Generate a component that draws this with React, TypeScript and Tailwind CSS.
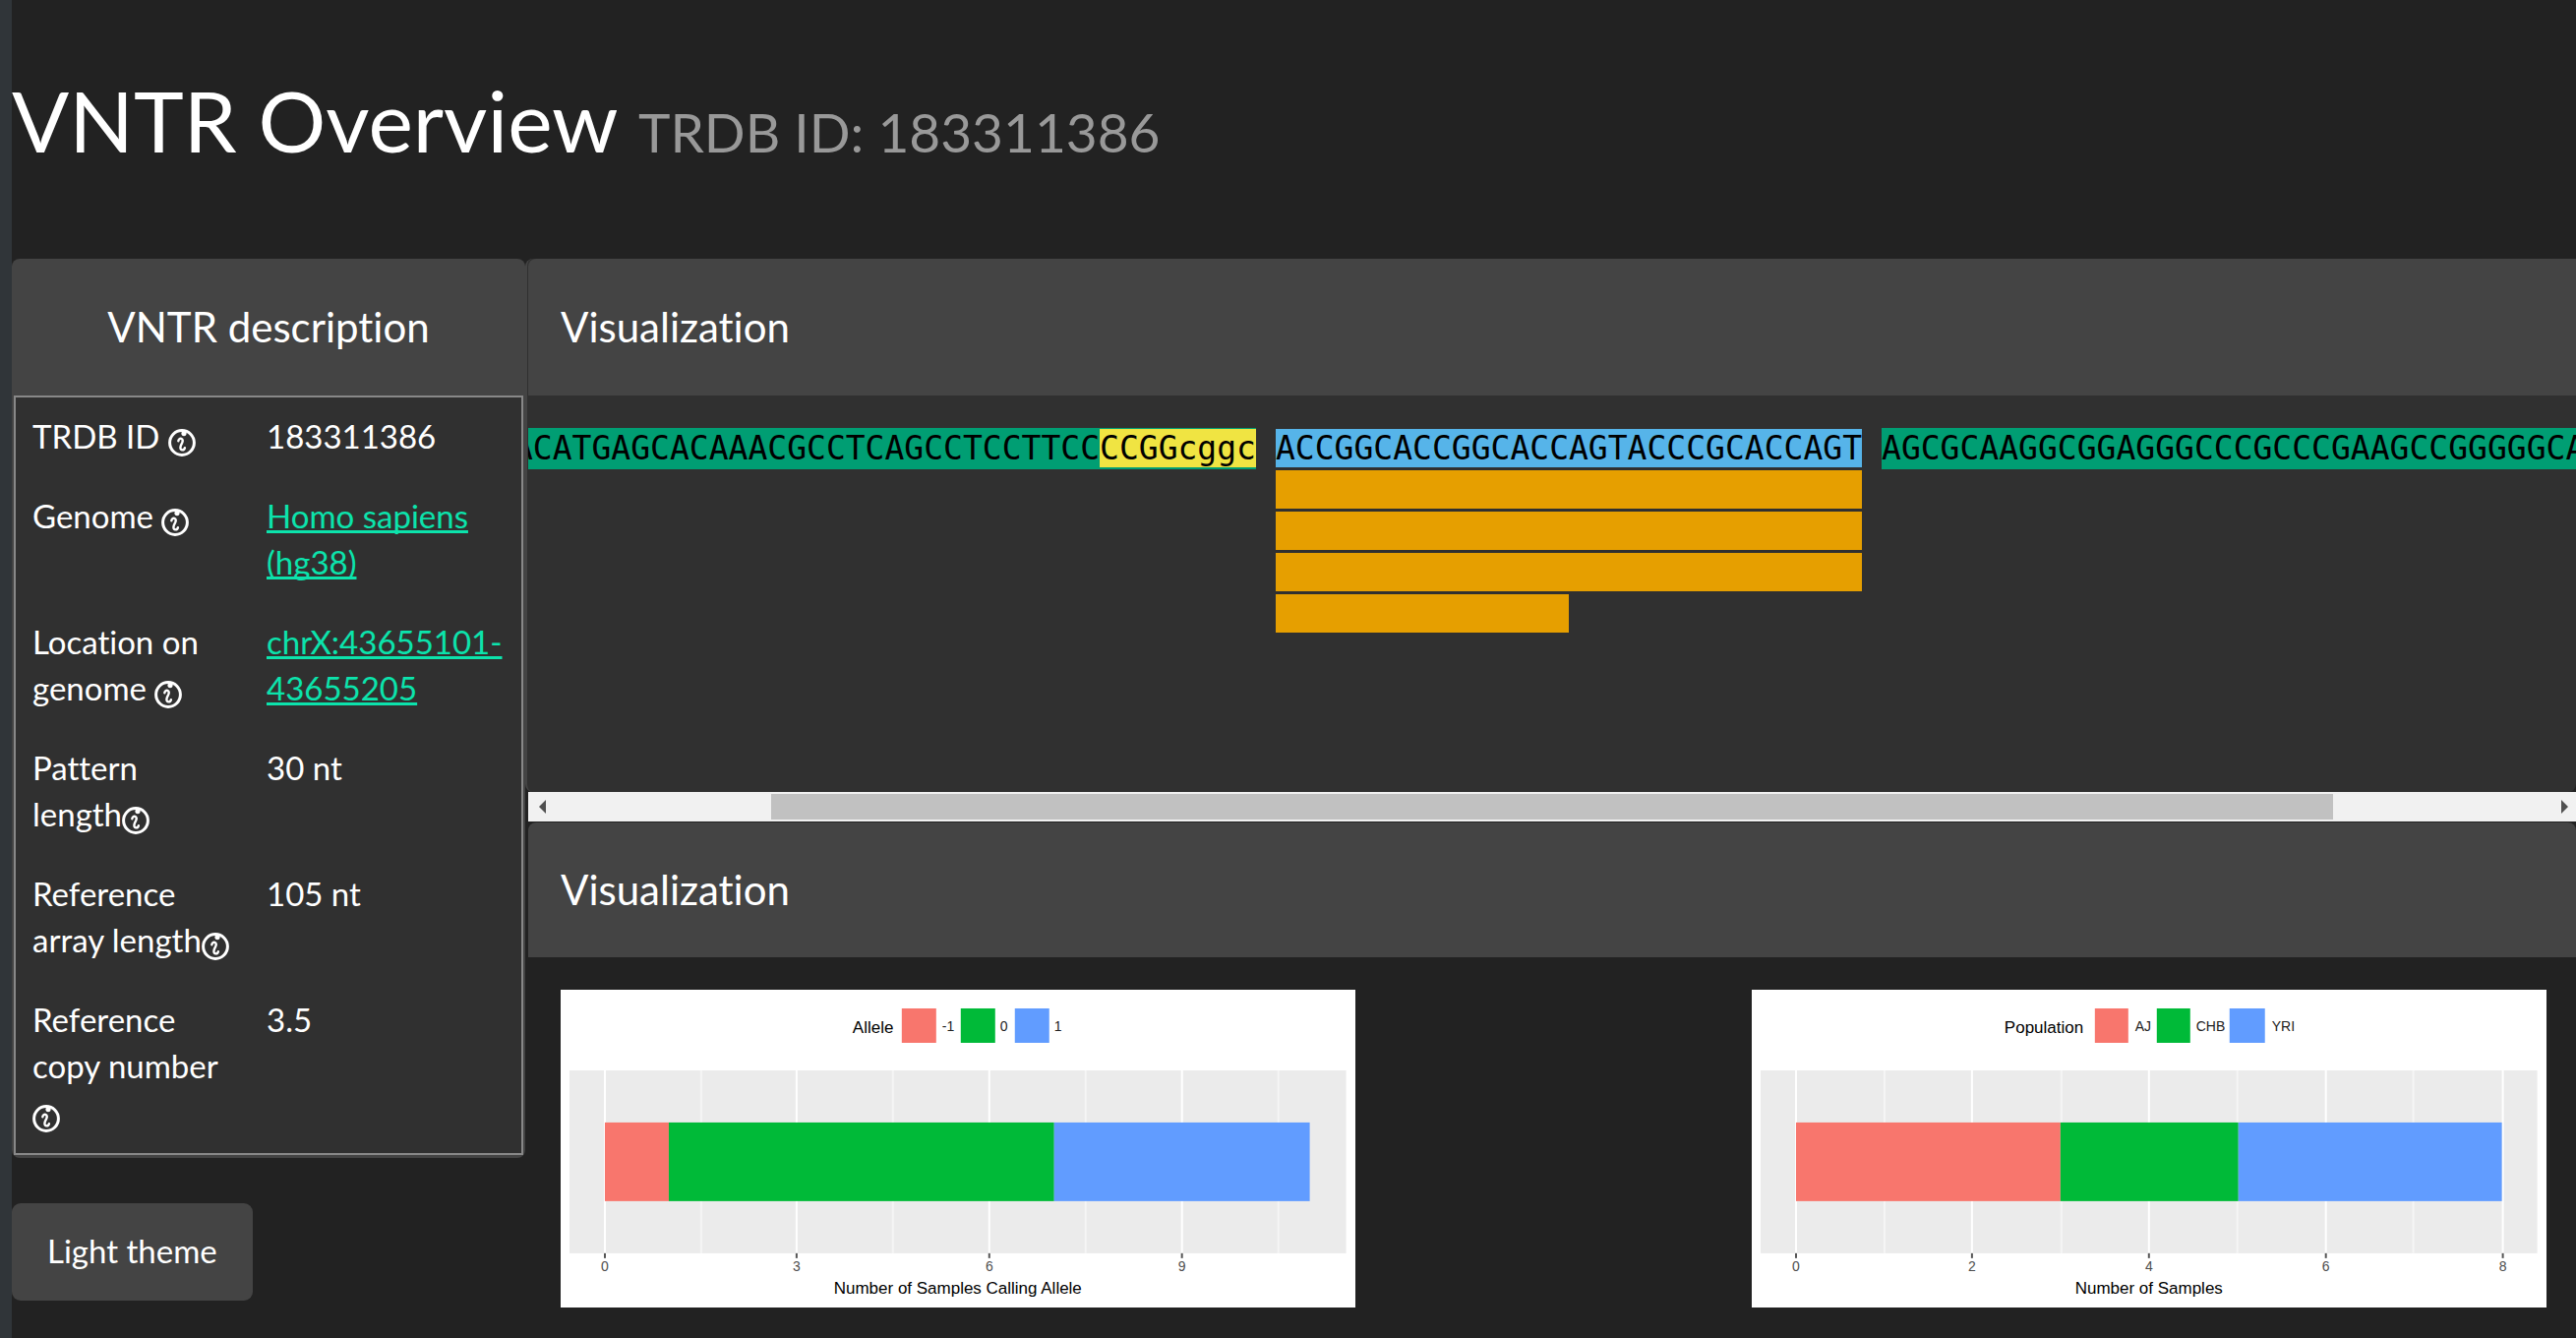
import React from "react";

function HelpIcon() {
  return (
    <svg
      role="img"
      aria-label="Help"
      viewBox="0 0 28 28"
      className="inline-block h-7 w-7 align-[-8px]"
      fill="none"
      stroke="currentColor"
      strokeLinecap="round"
      strokeLinejoin="round"
    >
      <circle cx="14" cy="14" r="12.4" strokeWidth="3" />
      <circle cx="16" cy="4.6" r="2.6" fill="currentColor" stroke="none" />
      <path
        d="M10.3 12.2C10.6 10.2 12 9.5 13.3 9.9C15 10.5 15 12 14.3 13.8L12.8 17C12 19.2 12.4 21 14 21.3C15.6 21.5 16.6 20.7 16.9 19.2"
        strokeWidth="2.4"
      />
    </svg>
  );
}

type Row = { label: React.ReactNode; value: string; href?: string };

const rows: Row[] = [
  { label: <>TRDB ID <HelpIcon /></>, value: "183311386" },
  { label: <>Genome <HelpIcon /></>, value: "Homo sapiens (hg38)", href: "#genome" },
  { label: <>Location on genome <HelpIcon /></>, value: "chrX:43655101-43655205", href: "#location" },
  { label: <>Pattern <span className="whitespace-nowrap">length<HelpIcon /></span></>, value: "30 nt" },
  { label: <>Reference <span className="whitespace-nowrap">array length<HelpIcon /></span></>, value: "105 nt" },
  { label: <>Reference copy number <HelpIcon /></>, value: "3.5" },
];

type Mark = { x: number; text: string };
type Swatch = { x: number; w: number; color: string; labelX: number; label: string };
type Segment = { x: number; w: number; color: string };

type ChartProps = {
  legend: string;
  legendX: number;
  swatches: Swatch[];
  ticks: Mark[];
  minor: number[];
  segments: Segment[];
  title: string;
};

const RED = "#f8766d";
const GREEN = "#00ba38";
const BLUE = "#619cff";

function Chart({ legend, legendX, swatches, ticks, minor, segments, title }: ChartProps) {
  return (
    <svg
      viewBox="0 0 808 323"
      role="img"
      aria-label={title}
      className="block w-2/5 bg-white font-['Liberation_Sans',Arial,sans-serif]"
    >
      <text x={legendX} y="44" fontSize="17" fill="#000">{legend}</text>
      {swatches.map((s) => (
        <g key={s.label}>
          <rect x={s.x} y="19" width={s.w} height="35" fill={s.color} />
          <text x={s.labelX} y="42" fontSize="14" fill="#222">{s.label}</text>
        </g>
      ))}
      <rect x="9" y="82" width="790" height="186" fill="#ebebeb" />
      {minor.map((x) => (
        <rect key={x} x={x - 1} y="82" width="2" height="186" fill="#f5f5f5" />
      ))}
      {ticks.map((t) => (
        <g key={t.x}>
          <rect x={t.x - 1} y="82" width="2" height="186" fill="#fff" />
          <rect x={t.x - 1} y="268" width="2" height="5" fill="#555" />
          <text x={t.x} y="286" fontSize="14" textAnchor="middle" fill="#4d4d4d">{t.text}</text>
        </g>
      ))}
      {segments.map((s) => (
        <rect key={s.x} x={s.x} y="135" width={s.w} height="80" fill={s.color} />
      ))}
      <text x="404" y="309" fontSize="17" textAnchor="middle" fill="#000">{title}</text>
    </svg>
  );
}

function Repeat({ half = false }: { half?: boolean }) {
  return <div className={half ? "h-[39px] w-1/2 bg-[#e69f00]" : "h-[39px] bg-[#e69f00]"} />;
}

export default function App() {
  return (
    <div className="min-h-screen overflow-hidden border-l-12 border-[#303539] bg-[#222] font-[Lato,sans-serif] text-[33px] leading-[47px] text-white [font-variant-ligatures:none]">
      <header className="h-[263px] pt-[73px]">
        <h1 className="text-[86px] leading-[97px]">
          VNTR Overview <small className="text-[55px] leading-none text-[#999]">TRDB ID: 183311386</small>
        </h1>
      </header>

      <div className="flex items-start">
        <aside className="w-[522px] shrink-0">
          <section className="rounded-lg bg-[#444] px-0.5 pb-[3px]">
            <h2 className="flex h-[139px] items-center justify-center text-[42px]">VNTR description</h2>
            <table className="w-full table-fixed border-separate border-spacing-0 border-2 border-[#888] bg-[#303030]">
              <tbody>
                {rows.map((row) => (
                  <tr key={row.value} className="align-top">
                    <th scope="row" className="w-[238px] px-[17px] pt-4 pb-[18px] text-left font-normal">
                      {row.label}
                    </th>
                    <td className="px-[17px] pt-4 pb-[18px]">
                      {row.href ? (
                        <a
                          href={row.href}
                          className="text-[#0ce3ac] underline decoration-3 underline-offset-2 [text-decoration-skip-ink:none]"
                        >
                          {row.value}
                        </a>
                      ) : (
                        row.value
                      )}
                    </td>
                  </tr>
                ))}
              </tbody>
            </table>
          </section>
          <button type="button" className="mt-[46px] h-[99px] rounded-[9px] bg-[#444] px-9 pb-0.5">
            Light theme
          </button>
        </aside>

        <main className="min-w-0 flex-1">
          <section>
            <div className="rounded-lg rounded-tr-none border-l-2 border-[#444] bg-[#303030] pl-px">
              <h2 className="flex h-[139px] items-center rounded-tl-lg bg-[#444] pl-[33px] text-[42px]">Visualization</h2>
              <div className="flex h-[403px] items-start gap-5 overflow-hidden pt-[33px] font-['DejaVu_Sans_Mono',monospace] leading-[39px] whitespace-nowrap text-black">
                <div className="-ml-[15px] flex shrink-0 items-start bg-[#009e73] pt-px pb-0.5">
                  <span>ACATGAGCACAAACGCCTCAGCCTCCTTCC</span>
                  <span className="bg-[#f0e442]">CCGGcggc</span>
                </div>
                <div className="flex shrink-0 flex-col gap-[3px] pt-px">
                  <span className="bg-[#56b4e9]">ACCGGCACCGGCACCAGTACCCGCACCAGT</span>
                  <Repeat />
                  <Repeat />
                  <Repeat />
                  <Repeat half />
                </div>
                <div className="shrink-0 bg-[#009e73] pt-px pb-0.5">AGCGCAAGGCGGAGGGCCCGCCCGAAGCCGGGGGCA</div>
              </div>
            </div>
            <div className="ml-[3px] flex h-[30px] items-center bg-[#f1f1f1] pr-2 pl-[11px]">
              <svg viewBox="0 0 7 14" className="h-3.5 w-[7px] shrink-0" fill="#505050">
                <path d="M7 0V14L0 7Z" />
              </svg>
              <div className="flex h-[26px] flex-1">
                <div className="w-[11.2%]" />
                <div className="w-[77.5%] bg-[#c1c1c1]" />
              </div>
              <svg viewBox="0 0 7 14" className="h-3.5 w-[7px] shrink-0" fill="#505050">
                <path d="M0 0V14L7 7Z" />
              </svg>
            </div>
          </section>

          <section className="mt-px ml-[3px]">
            <h2 className="flex h-[137px] items-center rounded-t-lg bg-[#444] pl-[33px] text-[42px]">Visualization</h2>
            <div className="flex justify-between pt-[33px] pr-[30px] pl-[33px]">
              <Chart
                legend="Allele"
                legendX={297}
                swatches={[
                  { x: 347, w: 35, color: RED, labelX: 388, label: "-1" },
                  { x: 407, w: 35, color: GREEN, labelX: 447, label: "0" },
                  { x: 462, w: 35, color: BLUE, labelX: 502, label: "1" },
                ]}
                ticks={[
                  { x: 45, text: "0" },
                  { x: 240, text: "3" },
                  { x: 436, text: "6" },
                  { x: 632, text: "9" },
                ]}
                minor={[143, 338, 534, 730]}
                segments={[
                  { x: 45, w: 65, color: RED },
                  { x: 110, w: 392, color: GREEN },
                  { x: 502, w: 260, color: BLUE },
                ]}
                title="Number of Samples Calling Allele"
              />
              <Chart
                legend="Population"
                legendX={257}
                swatches={[
                  { x: 349, w: 34, color: RED, labelX: 390, label: "AJ" },
                  { x: 412, w: 34, color: GREEN, labelX: 452, label: "CHB" },
                  { x: 486, w: 36, color: BLUE, labelX: 529, label: "YRI" },
                ]}
                ticks={[
                  { x: 45, text: "0" },
                  { x: 224, text: "2" },
                  { x: 404, text: "4" },
                  { x: 584, text: "6" },
                  { x: 764, text: "8" },
                ]}
                minor={[135, 315, 494, 673]}
                segments={[
                  { x: 45, w: 269, color: RED },
                  { x: 314, w: 181, color: GREEN },
                  { x: 495, w: 268, color: BLUE },
                ]}
                title="Number of Samples"
              />
            </div>
          </section>
        </main>
      </div>
    </div>
  );
}
